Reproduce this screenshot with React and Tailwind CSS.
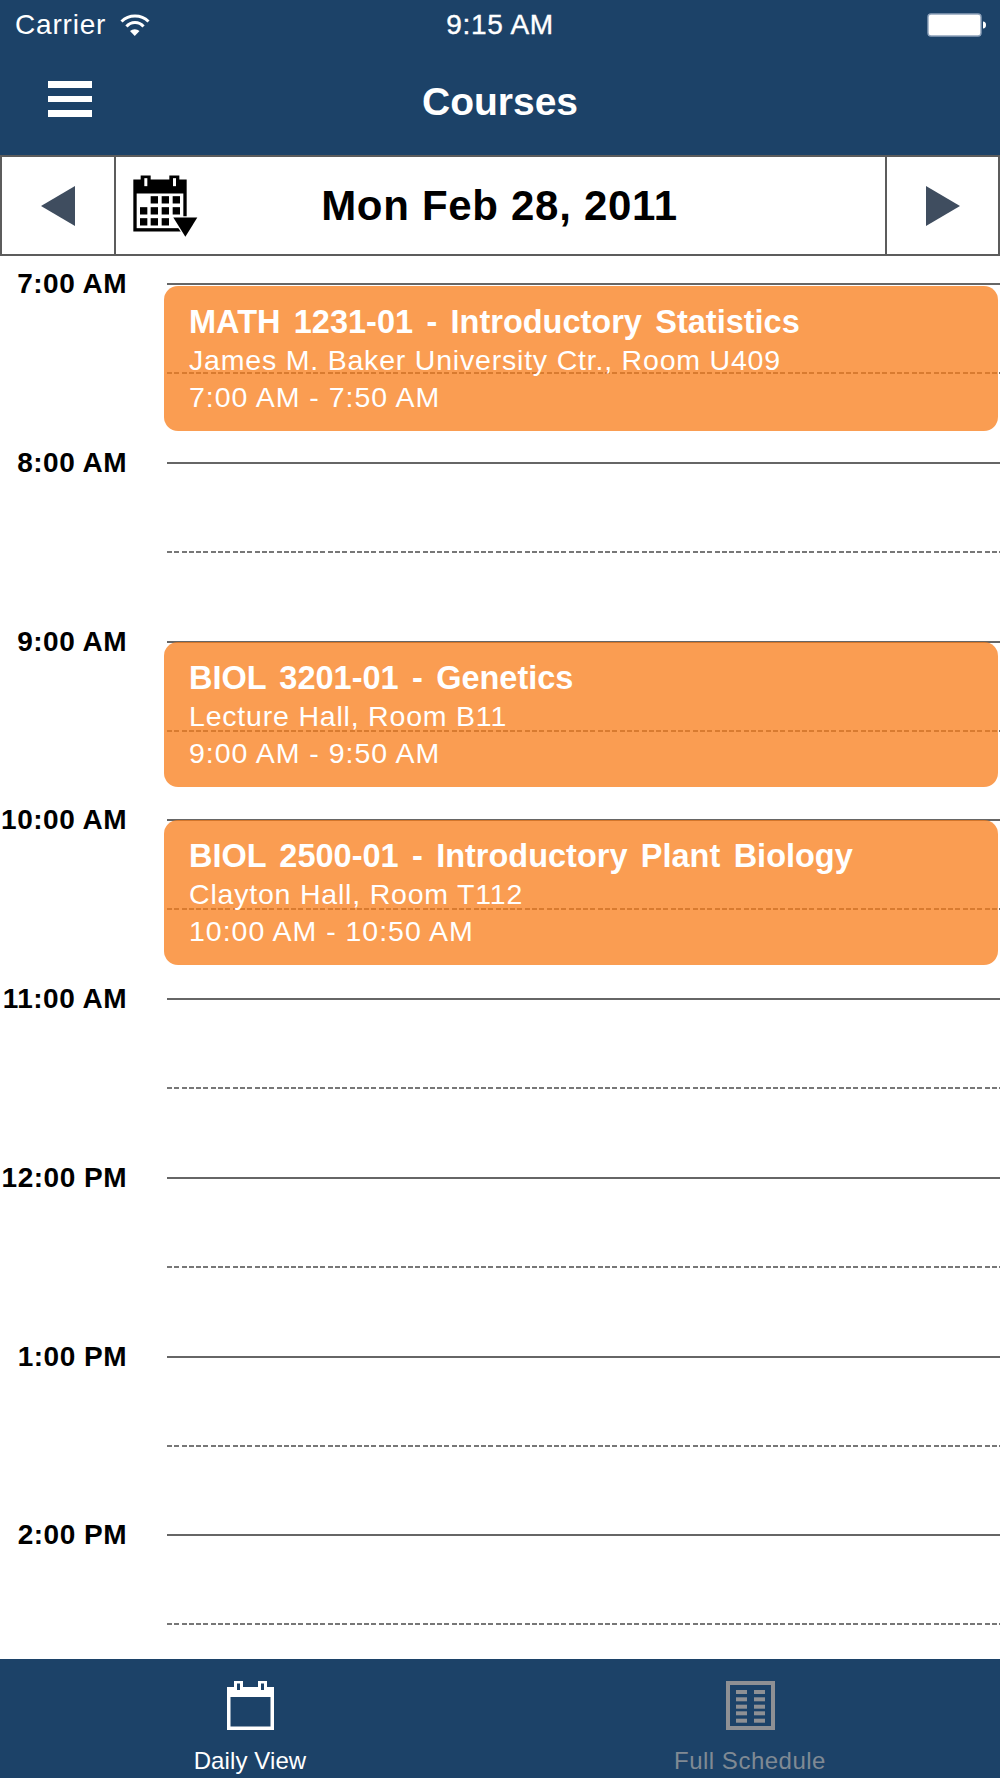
import React from "react";

const hours = [
  {
    label: "7:00 AM",
    event: {
      title: "MATH 1231-01 - Introductory Statistics",
      place: "James M. Baker University Ctr., Room U409",
      time: "7:00 AM - 7:50 AM",
      offset: "top-[2.7px]",
    },
  },
  { label: "8:00 AM" },
  {
    label: "9:00 AM",
    event: {
      title: "BIOL 3201-01 - Genetics",
      place: "Lecture Hall, Room B11",
      time: "9:00 AM - 9:50 AM",
      offset: "top-[1.2px]",
    },
  },
  {
    label: "10:00 AM",
    event: {
      title: "BIOL 2500-01 - Introductory Plant Biology",
      place: "Clayton Hall, Room T112",
      time: "10:00 AM - 10:50 AM",
      offset: "top-[0.75px]",
    },
  },
  { label: "11:00 AM" },
  { label: "12:00 PM" },
  { label: "1:00 PM" },
  { label: "2:00 PM" },
];

const WifiIcon = () => (
  <svg width="30" height="23" viewBox="0 0 30 23" className="ml-[14px]">
    <path d="M1.5 7.5a19.3 19.3 0 0 1 27 0" fill="none" stroke="white" strokeWidth="3" />
    <path d="M6.5 12.5a11 11 0 0 1 17 0" fill="none" stroke="white" strokeWidth="3" />
    <path d="M10 17a7 7 0 0 1 9.5 0L14.75 22z" fill="white" />
  </svg>
);

const BatteryIcon = () => (
  <svg width="59" height="24" viewBox="0 0 59 24">
    <rect x="1" y="1" width="53" height="22" rx="3" fill="white" stroke="#8fa3bb" strokeWidth="1.4" />
    <path d="M56 8.5c2 0 3 1.5 3 3.5s-1 3.5-3 3.5z" fill="white" />
  </svg>
);

const Hamburger = () => (
  <div className="flex flex-col gap-[8px] w-[44px] mb-[8px]">
    <div className="h-[7px] bg-white" />
    <div className="h-[6px] bg-white" />
    <div className="h-[7px] bg-white" />
  </div>
);

const DropdownCalendar = () => (
  <svg width="70" height="67" viewBox="60 50 210 200" className="shrink-0 ml-[14px]">
    <rect x="70" y="72" width="160" height="156" fill="black" />
    <rect x="80" y="114" width="140" height="104" fill="white" />
    <rect x="92" y="60" width="30" height="34" fill="black" />
    <rect x="178" y="60" width="30" height="34" fill="black" />
    <rect x="103" y="68" width="9" height="24" fill="white" />
    <rect x="189" y="68" width="9" height="24" fill="white" />
    {[122, 155, 188].map(x => <rect key={x} x={x} y="122" width="22" height="22" fill="black" />)}
    {[90, 122, 155, 188].map(x => <rect key={x} x={x} y="155" width="22" height="22" fill="black" />)}
    {[90, 122, 155].map(x => <rect key={x} x={x} y="188" width="22" height="22" fill="black" />)}
    <path d="M182 182h86l-43 66z" fill="white" />
    <path d="M190 186h72l-36 58z" fill="black" />
  </svg>
);

const DailyIcon = () => (
  <svg width="47" height="49" viewBox="0 0 47 49">
    <rect x="1.75" y="7.75" width="43.5" height="39.5" fill="none" stroke="white" strokeWidth="3.5" />
    <rect x="0" y="6" width="47" height="10" fill="white" />
    <rect x="7" y="0" width="9" height="10" fill="white" />
    <rect x="31" y="0" width="9" height="10" fill="white" />
    <rect x="10" y="2.5" width="3" height="6.5" fill="#1c4268" />
    <rect x="34" y="2.5" width="3" height="6.5" fill="#1c4268" />
  </svg>
);

const ScheduleIcon = () => (
  <svg width="49" height="49" viewBox="0 0 49 49">
    <rect x="2" y="2" width="45" height="45" fill="none" stroke="#8e9094" strokeWidth="4" />
    {[9, 16.3, 23.7, 30.3, 37.7].map(y => (
      <g key={y}>
        <rect x="10" y={y} width="11" height="4" fill="#8e9094" />
        <rect x="28" y={y} width="11" height="4" fill="#8e9094" />
      </g>
    ))}
  </svg>
);

const EventCard = ({ event }) => (
  <div className={`absolute ${event.offset} left-[164px] right-[2px] h-[145px] rounded-[14px] bg-[#f87c18]/75 pl-[25px] pt-[18px] text-white`}>
    <div className="text-[32.5px] leading-[37px] font-bold [word-spacing:4.3px] whitespace-nowrap">{event.title}</div>
    <div className="text-[28.5px] leading-[37px] mt-[1px] tracking-[0.8px] whitespace-nowrap">{event.place}</div>
    <div className="text-[28.5px] leading-[37px] tracking-[0.98px] whitespace-nowrap">{event.time}</div>
  </div>
);

const HourRow = ({ hour }) => (
  <div className="relative flex h-[178.75px]">
    <div className="w-[127px] shrink-0 -mt-[14px] text-right text-[28px] leading-[30px] font-bold tracking-[0.5px] text-black whitespace-nowrap">
      {hour.label}
    </div>
    <div className="flex-1 ml-[40px] border-t-2 border-[#666666]">
      <div className="mt-[87px] h-[2px] bg-[repeating-linear-gradient(90deg,#777777_0,#777777_5px,transparent_5px,transparent_7.3px)]" />
    </div>
    {hour.event && <EventCard event={hour.event} />}
  </div>
);

const ArrowLeft = () => (
  <svg width="34" height="40" viewBox="0 0 34 40">
    <path d="M34 0v40L0 20z" fill="#3f4d5f" />
  </svg>
);

const ArrowRight = () => (
  <svg width="34" height="40" viewBox="0 0 34 40">
    <path d="M0 0v40l34-20z" fill="#3f4d5f" />
  </svg>
);

const App = () => {
  return (
    <div className="w-[1000px] h-[1778px] flex flex-col overflow-hidden bg-white font-['Liberation_Sans',Arial,sans-serif]">
      <div className="bg-[#1c4268] text-white">
        <div className="grid grid-cols-3 items-center h-[50px] px-[14px]">
          <div className="flex items-center text-[28px] tracking-[0.8px] pl-[1px]">
            Carrier
            <WifiIcon />
          </div>
          <div className="text-center text-[28px] tracking-[0.7px] [-webkit-text-stroke:0.4px_white]">9:15 AM</div>
          <div className="flex justify-end">
            <BatteryIcon />
          </div>
        </div>
        <div className="grid grid-cols-[1fr_auto_1fr] items-center h-[105px] px-[48px]">
          <Hamburger />
          <div className="text-[39px] font-bold">Courses</div>
          <div />
        </div>
      </div>

      <div className="flex h-[101px] border-2 border-[#5c5c5c]">
        <div className="w-[114px] flex items-center justify-center border-r-2 border-[#5c5c5c]">
          <ArrowLeft />
        </div>
        <div className="flex-1 flex items-center">
          <DropdownCalendar />
          <div className="flex-1 text-center text-[42px] font-bold tracking-[0.7px] text-black pr-[86px]">
            Mon Feb 28, 2011
          </div>
        </div>
        <div className="w-[113px] flex items-center justify-center border-l-2 border-[#5c5c5c]">
          <ArrowRight />
        </div>
      </div>

      <div className="flex-1 overflow-hidden pt-[27px]">
        {hours.map(h => (
          <HourRow key={h.label} hour={h} />
        ))}
      </div>

      <div className="grid grid-cols-2 h-[119px] bg-[#1c4268] pt-[22px] text-[24px]">
        <div className="flex flex-col items-center text-white">
          <DailyIcon />
          <div className="mt-[17px] leading-[28px] tracking-[0.1px]">Daily View</div>
        </div>
        <div className="flex flex-col items-center text-[#808a94]">
          <ScheduleIcon />
          <div className="mt-[17px] leading-[28px] tracking-[0.5px]">Full Schedule</div>
        </div>
      </div>
    </div>
  );
};

export default App;
